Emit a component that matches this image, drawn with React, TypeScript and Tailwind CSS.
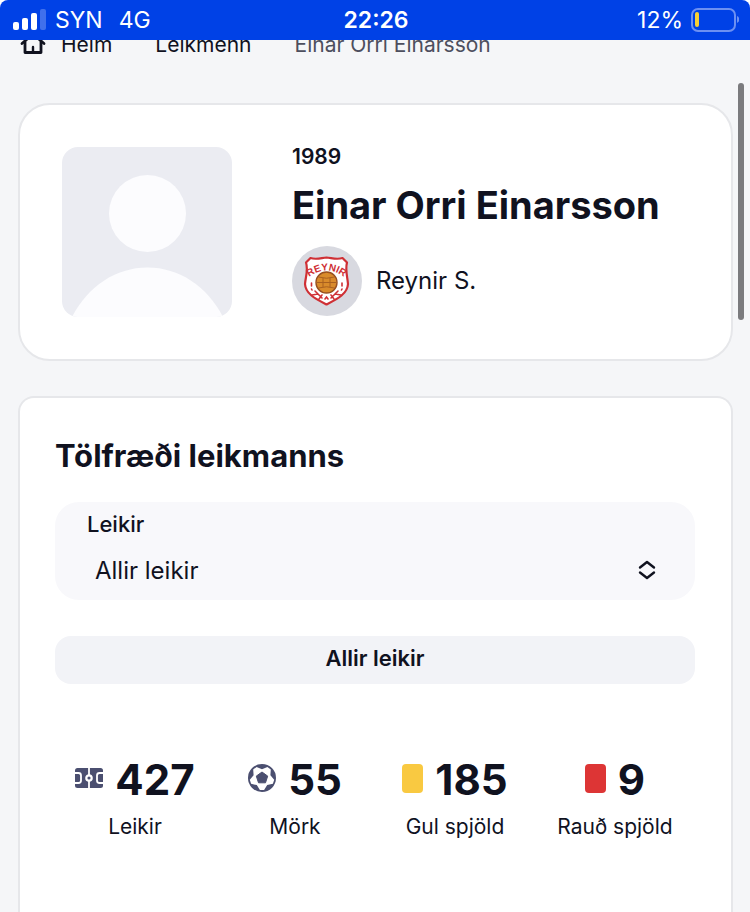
import React from 'react';

function SignalIcon() {
  return (
    <svg width="34" height="22" viewBox="0 0 34 22" fill="#fff" aria-hidden="true">
      <rect x="0" y="13" width="6" height="8" rx="2" />
      <rect x="9" y="9" width="6" height="12" rx="2" />
      <rect x="18" y="4" width="6" height="17" rx="2" />
      <rect x="27" y="0" width="6" height="21" rx="2" opacity="0.25" />
    </svg>
  );
}

function BatteryIcon() {
  return (
    <svg width="48" height="24" viewBox="0 0 48 24" fill="none" aria-hidden="true">
      <rect x="1" y="1" width="43" height="22" rx="6" stroke="#6c90f2" strokeWidth="2" />
      <rect x="4" y="4" width="4" height="15" rx="2" fill="#f7cf35" />
      <path d="M46 8c2 1 2.500 2.300 2.500 3.500S48 14 46 15z" fill="#6c90f2" />
    </svg>
  );
}

function HomeIcon() {
  return (
    <svg width="26" height="26" viewBox="0 0 26 26" fill="none" stroke="#10121f" strokeWidth="2.800" strokeLinejoin="round" strokeLinecap="round" aria-hidden="true">
      <path d="M2 11.500 13 2l11 9.500" />
      <path d="M5 10v10.500h16V10" />
      <path d="M13 15v5" strokeWidth="2.400" />
    </svg>
  );
}

function Avatar() {
  return (
    <svg className="size-[170px] shrink-0 rounded-2xl" viewBox="0 0 170 170" role="img" aria-label="Einar Orri Einarsson">
      <rect width="170" height="170" fill="#ebecf2" />
      <circle cx="85.500" cy="66.500" r="38.500" fill="#fcfcfe" />
      <path d="M10 170C26 139 54 120.500 85.500 120.500S145 139 161 170z" fill="#fcfcfe" />
    </svg>
  );
}

function ClubCrest() {
  return (
    <svg width="70" height="70" viewBox="0 0 70 70" aria-hidden="true">
      <circle cx="35" cy="35" r="35" fill="#d8d9e0" />
      <path
        d="M18.500 12C24 14 29 12 34.500 11.500 40 12 45 14 50.500 12L55 16.500C53 24 55.500 31 56 38 55.500 48 45 53 34.500 58.500 24 53 13.500 48 13 38 13.500 31 16.500 24 14 16.500z"
        fill="#fff" stroke="#cf3035" strokeWidth="2.200" strokeLinejoin="round"
      />
      <path id="crest-arc" d="M14.500 33Q34.500 16 54.500 33" fill="none" />
      <text fill="#cf3035" className="font-['Liberation_Sans_Narrow','Liberation_Sans',sans-serif]" fontSize="10" fontWeight="700">
        <textPath href="#crest-arc" startOffset="50%" textAnchor="middle">REYNIR</textPath>
      </text>
      <g fill="none" stroke="#cf3035" strokeWidth="1.600" strokeLinecap="round">
        <path d="M19.500 37v3m0 3 .5 1M50 37v3m0 3-.5 1M23 45l3 3m20-3-3 3M20 49l6-1 4 4M49 49l-6-1-4 4M30 49l-3 4M39 49l3 4M33 53l1.500-2 1.500 2" />
      </g>
      <circle cx="34.500" cy="36.500" r="10.500" fill="#d98b2b" stroke="#98501f" strokeWidth="1.400" />
      <path d="M26.500 31q8 2.500 16 0M24.500 36.500h20M26.500 42q8-2.500 16 0M31 32v9M38 32v9" fill="none" stroke="#a9601f" strokeWidth="1" />
    </svg>
  );
}

function PitchIcon() {
  return (
    <svg className="mb-1" width="28" height="20" viewBox="0 0 28 20" fill="none" stroke="#fff" strokeWidth="1.800" aria-hidden="true">
      <rect width="28" height="20" rx="2.500" fill="#4b4f70" stroke="none" />
      <path d="M14 0v7M14 13v7M0 5h3.500q2.500 0 2.500 2.500v5q0 2.500-2.500 2.500H0M28 5h-3.500q-2.500 0-2.500 2.500v5q0 2.500 2.500 2.500H28" />
      <circle cx="14" cy="10" r="2.700" strokeWidth="2.200" />
    </svg>
  );
}

function BallIcon() {
  return (
    <svg className="mb-1" width="28" height="28" viewBox="0 0 28 28" aria-hidden="true">
      <circle cx="14" cy="14" r="14" fill="#4b4f70" />
      <path
        d="M14 5.200 19.400 2.900 22.800 5.500 22.400 11.300 26.200 15.700 24.900 19.800 19.200 21.100 16.100 26.100H11.900L8.800 21.100 3.100 19.800 1.800 15.700 5.600 11.300 5.200 5.500 8.600 2.900z"
        fill="#fff"
      />
      <path d="M14 8 19.700 12.100 17.500 18.800H10.500L8.300 12.100z" fill="#4b4f70" stroke="#4b4f70" strokeWidth="1" strokeLinejoin="round" />
    </svg>
  );
}

function Card({ className }: { className: string }) {
  return <span className={`mb-1 h-[29px] w-[21px] rounded-sm ${className}`} />;
}

function Stat({ icon, value, label }: { icon: React.ReactNode; value: number; label: string }) {
  return (
    <div className="flex flex-col items-center gap-[7px]">
      <dd className="order-1 flex items-center gap-3 text-[42px] leading-[52px] font-bold">
        {icon}
        {value}
      </dd>
      <dt className="order-2 text-[21px] leading-7 whitespace-nowrap">{label}</dt>
    </div>
  );
}

export default function App() {
  return (
    <div className="relative flex min-h-screen flex-col bg-[#f5f6f8] font-['Inter',sans-serif] text-[#10121f]">
      <div className="relative z-10 bg-white">
        <header className="grid h-10 grid-cols-3 items-center rounded-t-lg bg-[#0041e6] pr-[11px] pl-[13px] text-[23px] text-white">
          <div className="flex items-center gap-2">
            <SignalIcon />
            <span>SYN</span>
            <span className="ml-2">4G</span>
          </div>
          <div className="text-center font-semibold">22:26</div>
          <div className="flex items-center justify-end gap-2">
            <span>12%</span>
            <BatteryIcon />
          </div>
        </header>
      </div>

      <nav aria-label="Slóð" className="-mt-2 flex h-[26px] items-center pl-5 text-[21px]">
        <a href="#heim" className="flex items-center gap-[15px]">
          <HomeIcon />
          Heim
        </a>
        <a href="#leikmenn" className="ml-[43px]">Leikmenn</a>
        <span className="ml-[43px] text-[#4d4f5e]">Einar Orri Einarsson</span>
      </nav>

      <main className="mt-[45px] mr-[17px] ml-[18px] flex flex-1 flex-col gap-[35px]">
        <section className="flex items-start gap-[60px] rounded-[32px] border-2 border-[#e6e7ea] bg-white p-[42px]">
          <Avatar />
          <div className="flex flex-col">
            <span className="text-[21px] leading-5 font-semibold">1989</span>
            <h1 className="mt-3 mb-[15px] text-[38px] leading-[52px] font-bold whitespace-nowrap">Einar Orri Einarsson</h1>
            <a href="#reynir" className="flex items-center gap-[14px] text-2xl">
              <ClubCrest />
              Reynir S.
            </a>
          </div>
        </section>

        <section className="flex-1 rounded-t-2xl border-2 border-b-0 border-[#e6e7ea] bg-white pt-9 pr-9 pl-[35px]">
          <h2 className="text-[31px] leading-[44px] font-bold">Tölfræði leikmanns</h2>
          <div className="relative mt-6 rounded-3xl bg-[#f8f8fb]">
            <label htmlFor="games" className="block px-8 pt-2 text-[22px] leading-7 font-medium">Leikir</label>
            <select id="games" className="h-[62px] w-full appearance-none bg-transparent px-10 pt-1 text-2xl">
              <option>Allir leikir</option>
            </select>
            <svg className="pointer-events-none absolute right-[39px] bottom-5" width="18" height="20" viewBox="0 0 18 20" fill="none" stroke="#10121f" strokeWidth="2.400" strokeLinecap="round" strokeLinejoin="round" aria-hidden="true">
              <path d="M2 7.500 9 2l7 5.500M2 12.500 9 18l7-5.500" />
            </svg>
          </div>
          <button type="button" className="mt-9 h-12 w-full rounded-2xl bg-[#f2f3f7] pb-1 text-[22px] font-semibold">Allir leikir</button>
          <dl className="mt-[70px] grid grid-cols-4">
            <Stat icon={<PitchIcon />} value={427} label="Leikir" />
            <Stat icon={<BallIcon />} value={55} label="Mörk" />
            <Stat icon={<Card className="bg-[#f9c941]" />} value={185} label="Gul spjöld" />
            <Stat icon={<Card className="bg-[#dd3535]" />} value={9} label="Rauð spjöld" />
          </dl>
        </section>
      </main>

      <div className="absolute top-[83px] right-[6px] h-[237px] w-[6px] rounded-full bg-[#7b7b7e]" />
    </div>
  );
}
